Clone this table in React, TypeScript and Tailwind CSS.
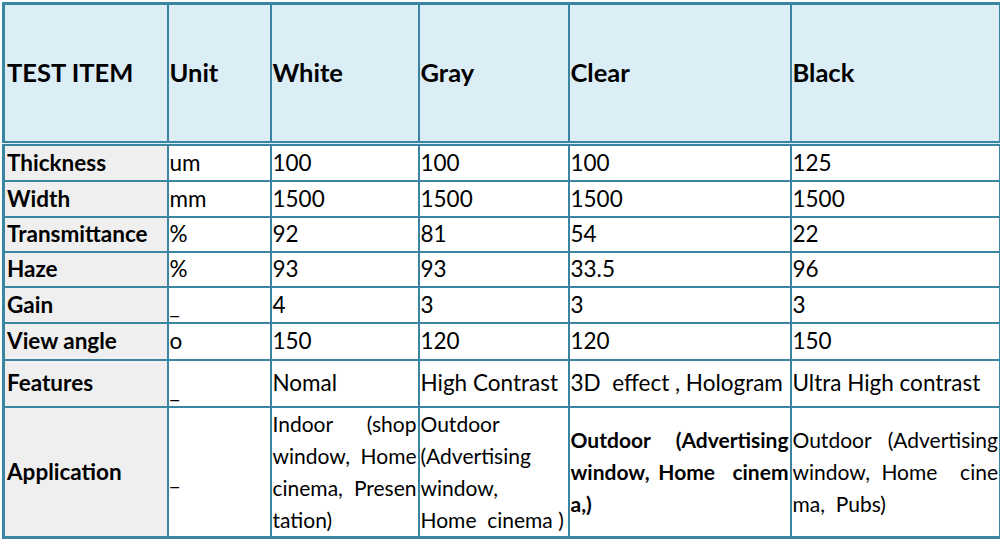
const cols = ["TEST ITEM", "Unit", "White", "Gray", "Clear", "Black"];

const rows: { h: string; cells: string[] }[] = [
  { h: "h-[37px]", cells: ["Thickness", "um", "100", "100", "100", "125"] },
  { h: "h-[36px]", cells: ["Width", "mm", "1500", "1500", "1500", "1500"] },
  { h: "h-[35px]", cells: ["Transmittance", "%", "92", "81", "54", "22"] },
  { h: "h-[35px]", cells: ["Haze", "%", "93", "93", "33.5", "96"] },
  { h: "h-[36px]", cells: ["Gain", "_", "4", "3", "3", "3"] },
  { h: "h-[37px]", cells: ["View angle", "o", "150", "120", "120", "150"] },
  {
    h: "h-[47px]",
    cells: ["Features", "_", "Nomal", "High Contrast", "3D  effect , Hologram", "Ultra High contrast"],
  },
];

// lines of the application row, justified one by one like the original doc
function Lines({ lines, bold }: { lines: string[]; bold?: boolean }) {
  return (
    <div className={"text-[21px] " + (bold ? "font-bold" : "")}>
      {lines.map((l, i) => (
        <div
          key={i}
          className={
            i < lines.length - 1
              ? "whitespace-pre text-justify [text-align-last:justify]"
              : "whitespace-pre"
          }
        >
          {l}
        </div>
      ))}
    </div>
  );
}

export default function App() {
  return (
    <div className="bg-white w-[1000px] h-[540px] pt-[2px] pl-[2px] font-['Lato','Liberation_Sans',sans-serif] text-black">
      <table className="w-[997px] table-fixed border-collapse border-[3px] border-[#3a86a2] text-[22.5px] leading-[32px]">
        <colgroup>
          <col className="w-[164px]" />
          <col className="w-[103px]" />
          <col className="w-[148px]" />
          <col className="w-[150px]" />
          <col className="w-[222px]" />
          <col className="w-[210px]" />
        </colgroup>
        <thead>
          <tr className="h-[140px] bg-[#dbedf5]">
            {cols.map((c, i) => (
              <th
                key={c}
                className={
                  "border-2 border-b-[5px] border-b-[#3a86a2] border-double border-[#3a86a2] pb-[3px] text-left align-middle text-[25.5px] font-bold " +
                  (i === 0 ? "pl-[2px]" : "pl-px")
                }
              >
                {c}
              </th>
            ))}
          </tr>
        </thead>
        <tbody>
          {rows.map((r) => (
            <tr key={r.cells[0]} className={r.h}>
              {r.cells.map((c, i) => (
                <td
                  key={i}
                  className={
                    "border-2 border-[#3a86a2] py-0 whitespace-pre " +
                    (i === 0 ? "bg-[#efefef] font-bold pl-[2px] " : "pl-px ") +
                    (i === 1 && c === "_" ? "align-bottom" : "align-middle")
                  }
                >
                  {c}
                </td>
              ))}
            </tr>
          ))}
          <tr className="h-[131px]">
            <td className="border-2 border-[#3a86a2] bg-[#efefef] pl-[2px] font-bold align-middle">
              Application
            </td>
            <td className="border-2 border-[#3a86a2] pl-px align-middle">
              <div className="pt-[10px]">_</div>
            </td>
            <td className="border-2 border-[#3a86a2] px-px align-middle">
              <Lines lines={["Indoor (shop", "window, Home", "cinema, Presen", "tation)"]} />
            </td>
            <td className="border-2 border-[#3a86a2] px-px align-middle">
              <Lines lines={["Outdoor", "(Advertising", "window,", "Home  cinema )"]} />
            </td>
            <td className="border-2 border-[#3a86a2] px-px align-middle">
              <Lines bold lines={["Outdoor (Advertising", "window, Home  cinem", "a,)"]} />
            </td>
            <td className="border-2 border-[#3a86a2] px-px align-middle">
              <Lines lines={["Outdoor (Advertising", "window, Home  cine", "ma,  Pubs)"]} />
            </td>
          </tr>
        </tbody>
      </table>
    </div>
  );
}
